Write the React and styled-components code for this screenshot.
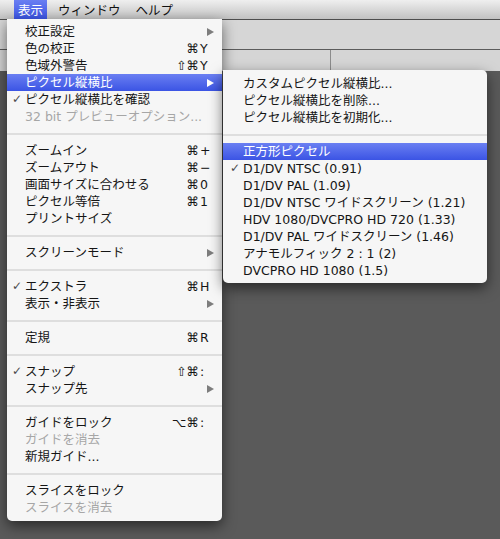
import React from 'react';
import styled, { createGlobalStyle, css } from 'styled-components';

const viewMenu = [
  { label: '校正設定', arrow: true },
  { label: '色の校正', mods: '⌘', key: 'Y' },
  { label: '色域外警告', mods: '⇧⌘', key: 'Y' },
  { label: 'ピクセル縦横比', arrow: true, active: true, sub: true },
  { label: 'ピクセル縦横比を確認', checked: true },
  { label: '32 bit プレビューオプション...', disabled: true },
  { sep: true },
  { label: 'ズームイン', mods: '⌘', key: '+' },
  { label: 'ズームアウト', mods: '⌘', key: '−' },
  { label: '画面サイズに合わせる', mods: '⌘', key: '0' },
  { label: 'ピクセル等倍', mods: '⌘', key: '1' },
  { label: 'プリントサイズ' },
  { sep: true },
  { label: 'スクリーンモード', arrow: true },
  { sep: true },
  { label: 'エクストラ', checked: true, mods: '⌘', key: 'H' },
  { label: '表示・非表示', arrow: true },
  { sep: true },
  { label: '定規', mods: '⌘', key: 'R' },
  { sep: true },
  { label: 'スナップ', checked: true, mods: '⇧⌘', key: ':' },
  { label: 'スナップ先', arrow: true },
  { sep: true },
  { label: 'ガイドをロック', mods: '⌥⌘', key: ':' },
  { label: 'ガイドを消去', disabled: true },
  { label: '新規ガイド...' },
  { sep: true },
  { label: 'スライスをロック' },
  { label: 'スライスを消去', disabled: true },
];

const aspectMenu = [
  { label: 'カスタムピクセル縦横比...' },
  { label: 'ピクセル縦横比を削除...' },
  { label: 'ピクセル縦横比を初期化...' },
  { sep: true },
  { label: '正方形ピクセル', active: true },
  { label: 'D1/DV NTSC (0.91)', checked: true },
  { label: 'D1/DV PAL (1.09)' },
  { label: 'D1/DV NTSC ワイドスクリーン (1.21)' },
  { label: 'HDV 1080/DVCPRO HD 720 (1.33)' },
  { label: 'D1/DV PAL ワイドスクリーン (1.46)' },
  { label: 'アナモルフィック 2 : 1 (2)' },
  { label: 'DVCPRO HD 1080 (1.5)' },
];

const MenuList = ({ items, sub }) =>
  items.map((item, idx) =>
    item.sep ? (
      <Separator key={idx} />
    ) : (
      <Item key={idx} $active={item.active} $disabled={item.disabled} $sub={sub}>
        <Check $active={item.active}>{item.checked ? '✓' : ''}</Check>
        <Label>{item.label}</Label>
        {item.key && (
          <Shortcut>
            <Mods>{item.mods}</Mods>
            <Key>{item.key}</Key>
          </Shortcut>
        )}
        {item.arrow && <Arrow $active={item.active} />}
        {item.sub && (
          <SubMenu>
            <MenuList items={aspectMenu} sub />
          </SubMenu>
        )}
      </Item>
    )
  );

const App = () => {
  return (
    <>
      <GlobalStyle />
      <Screen>
        <MenuBar>
          <MenuTitle $active>表示</MenuTitle>
          <MenuTitle>ウィンドウ</MenuTitle>
          <MenuTitle>ヘルプ</MenuTitle>
        </MenuBar>
        <Toolbar />
        <OptionsBar>
          <Pane $width='330px' />
          <Pane $divider />
        </OptionsBar>
        <Workspace />
        <DropMenu>
          <MenuList items={viewMenu} />
        </DropMenu>
      </Screen>
    </>
  );
};

export default App;

const GlobalStyle = createGlobalStyle`
  html, body {
    margin: 0;
    padding: 0;
  }
  body {
    background: #5a5a5a;
    font-family: "DejaVu Sans", "Noto Sans CJK JP", sans-serif;
    overflow: hidden;
  }
`;

const Screen = styled.div`
  position: relative;
  display: flex;
  flex-direction: column;
  width: 500px;
  height: 539px;
  overflow: hidden;
  background: #5a5a5a;
`;

const MenuBar = styled.div`
  display: flex;
  gap: 7px;
  height: 19px;
  padding-left: 14px;
  background: linear-gradient(#efefef, #c2c2c2);
  border-bottom: 1px solid #4e4e4e;
  font-family: "Noto Sans CJK JP", sans-serif;
  font-size: 12.5px;
`;

const MenuTitle = styled.div`
  padding: 0 4px;
  line-height: 19px;
  color: #111;
  ${({ $active }) =>
    $active &&
    css`
      color: #fff;
      background: linear-gradient(#6a7ff2, #3b54e4);
    `}
`;

const Toolbar = styled.div`
  height: 29px;
  background: #d6d6d6;
  border-bottom: 1px solid #5c5c5c;
`;

const OptionsBar = styled.div`
  display: flex;
  height: 21px;
  background: #d5d5d5;
`;

const Pane = styled.div`
  width: ${({ $width }) => $width || 'auto'};
  flex: ${({ $width }) => ($width ? 'none' : 1)};
  border-left: ${({ $divider }) => ($divider ? '1px solid #8c8c8c' : 'none')};
`;

const Workspace = styled.div`
  flex: 1;
  background: #5a5a5a;
`;

const DropMenu = styled.div`
  position: absolute;
  left: 7px;
  top: 19px;
  width: 215px;
  padding: 4px 0 5px;
  background: #f6f6f6;
  border-radius: 0 0 5px 5px;
  box-shadow: 0 5px 14px rgba(0, 0, 0, 0.55);
  font-size: 12.5px;
  z-index: 10;
`;

const SubMenu = styled.div`
  position: absolute;
  left: calc(100% + 1px);
  top: -4px;
  width: 264px;
  padding: 5px 0 4px;
  background: #f6f6f6;
  border-radius: 0 5px 5px 5px;
  box-shadow: 0 5px 14px rgba(0, 0, 0, 0.55);
  z-index: 20;
`;

const Item = styled.div`
  position: relative;
  display: flex;
  align-items: center;
  height: 17px;
  line-height: 17px;
  padding-left: ${({ $sub }) => ($sub ? '7px' : '5px')};
  color: ${({ $disabled }) => ($disabled ? '#a6a6a6' : '#151515')};
  white-space: nowrap;
  ${({ $active }) =>
    $active &&
    css`
      color: #fff;
      background: linear-gradient(#6a7ff2, #3b54e4);
    `}
`;

const Check = styled.span`
  width: 13px;
  flex: none;
  font-size: 12px;
  color: ${({ $active }) => ($active ? '#fff' : '#4a4a4a')};
`;

const Label = styled.span`
  flex: 1;
`;

const Shortcut = styled.span`
  display: flex;
  padding-right: 9px;
`;

const Mods = styled.span`
  text-align: right;
`;

const Key = styled.span`
  width: 13px;
  margin-left: 1px;
  text-align: left;
`;

const Arrow = styled.span`
  width: 0;
  height: 0;
  margin-right: 8px;
  border-top: 4.5px solid transparent;
  border-bottom: 4.5px solid transparent;
  border-left: 7px solid ${({ $active }) => ($active ? '#fff' : '#7d7d7d')};
`;

const Separator = styled.div`
  display: flex;
  align-items: center;
  height: 17px;
  &::before {
    content: '';
    flex: 1;
    height: 2px;
    background: #dedede;
  }
`;
